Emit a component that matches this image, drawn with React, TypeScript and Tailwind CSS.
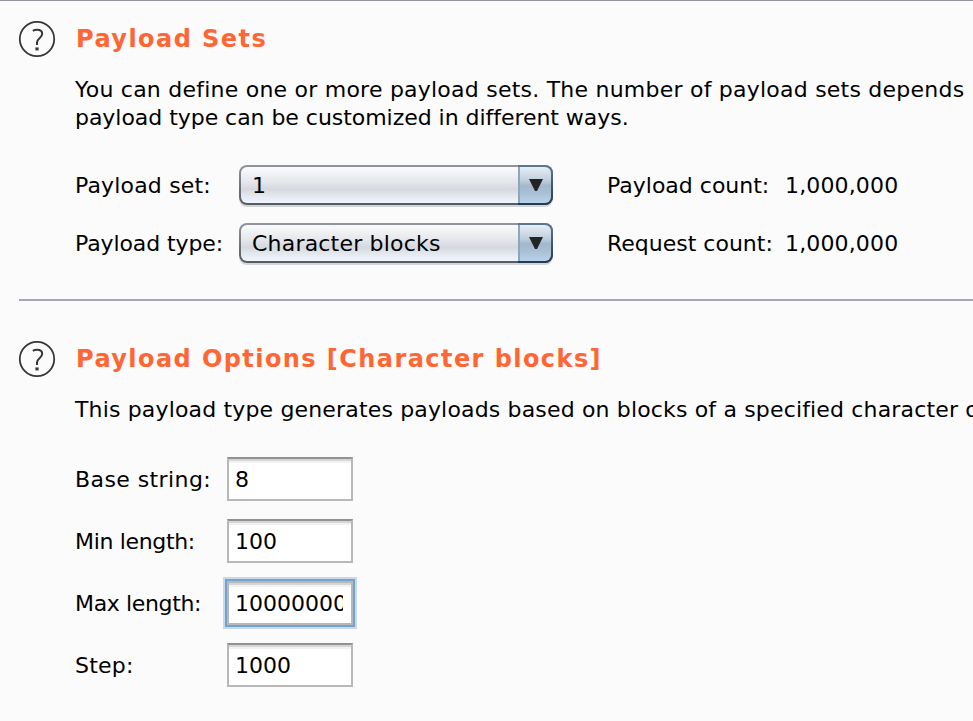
import type { ReactNode } from 'react';

function Help() {
  return (
    <svg className="h-[38px] w-[38px] shrink-0" viewBox="0 0 38 38" fill="none" stroke="#383838">
      <circle cx="19" cy="19" r="17.2" strokeWidth="1.8" />
      <path d="M14.8 10.8Q16.6 9.8 19 9.8C22.4 9.8 24.2 11.4 24.2 13.8C24.2 18 19 18.4 19 22.4V25" strokeWidth="2" />
      <path d="M19 27.4V30.4" strokeWidth="3.2" />
    </svg>
  );
}

function Title({ children, className }: { children: ReactNode; className: string }) {
  return <h2 className={`pl-[1px] text-[24px] leading-[28px] font-bold whitespace-nowrap text-[#ff6633] ${className}`}>{children}</h2>;
}

function Select({ value }: { value: string }) {
  return (
    <button className="flex h-[40px] w-[314px] shrink-0 overflow-hidden rounded-[8px] bg-linear-to-b from-[#92959d] to-[#555b62] p-[2px] text-left shadow-[0_2px_0_#d4d5d6]">
      <span className="flex h-[36px] flex-1 items-center rounded-l-[6px] bg-[linear-gradient(#fbfbfc_0%,#e4e6eb_42%,#d5d8df_62%,#e5e9f0_82%,#f1f5fd_100%)] pt-[2px] pl-[11px]">
        <span className="leading-[28px] tracking-[0.2px] whitespace-nowrap">{value}</span>
      </span>
      <span className="-my-[2px] -mr-[2px] flex h-[40px] w-[35px] bg-linear-to-b from-[#5f7891] to-[#203b53] py-[2px] pr-[2px]">
        <span className="flex h-[36px] w-[33px] justify-center rounded-r-[6px] border-l-2 border-[#8fa5ba] bg-[linear-gradient(#e7eef5_0%,#c0cedc_38%,#a3b8cd_52%,#a9bfd4_72%,#bad2e9_100%)] pt-[12px]">
          <svg className="h-[13px] w-[14px]" viewBox="0 0 14 13"><path d="M0 0H14L8 12H6Z" fill="#242424" /></svg>
        </span>
      </span>
    </button>
  );
}

function SelectRow({ label, value, stat, labelClass }: { label: string; value: string; stat: string; labelClass: string }) {
  return (
    <div className="flex h-[40px] items-center">
      <span className={`w-[164px] shrink-0 pt-[2px] whitespace-nowrap ${labelClass}`}>{label}</span>
      <Select value={value} />
      <span className="ml-[54px] w-[178px] shrink-0 pt-[2px] whitespace-nowrap">{stat}</span>
      <span className="pt-[2px] tracking-[0.15px]">1,000,000</span>
    </div>
  );
}

function Field({ label, value, focused, className }: { label: string; value: string; focused?: boolean; className: string }) {
  return (
    <label className="flex h-[44px] items-center">
      <span className={`w-[152px] shrink-0 pt-[2px] whitespace-nowrap ${className}`}>{label}</span>
      <input
        defaultValue={value}
        className={`h-[44px] w-[126px] border-2 border-[#b8b8b8] bg-white pt-[1px] pr-[8px] pl-[6px] leading-[28px] outline-none ${focused ? 'shadow-[inset_0_2px_0_#d6d6d6,inset_0_4px_0_#f2f2f2,0_0_0_2px_#73a4d1,0_0_0_4px_#c9d9ea]' : 'border-t-[#919191] shadow-[inset_0_2px_0_#d6d6d6,inset_0_4px_0_#f2f2f2]'}`}
      />
    </label>
  );
}

export default function App() {
  return (
    <div className="h-[721px] w-[973px] overflow-hidden border-t border-[#9293a1] bg-[#fbfbfb] font-['DejaVu_Sans',sans-serif] text-[22px] leading-[28px] text-black [font-variant-ligatures:none]">
      <section className="flex h-[298px] pt-[19px] pl-[18px]">
        <Help />
        <div className="ml-[19px] shrink-0 pt-[5px]">
          <Title className="tracking-[1.45px]">Payload Sets</Title>
          <p className="mt-[23px] whitespace-nowrap"><span className="tracking-[0.23px]">You can define one or more payload sets. The number of payload sets depends</span><br /><span className="tracking-[-0.04px]">payload type can be customized in different ways.</span></p>
          <div className="mt-[33px] flex flex-col gap-[18px]">
            <SelectRow label="Payload set:" value="1" stat="Payload count:" labelClass="tracking-[0.17px]" />
            <SelectRow label="Payload type:" value="Character blocks" stat="Request count:" labelClass="tracking-[-0.1px]" />
          </div>
        </div>
      </section>
      <div className="ml-[19px] h-[2px] bg-[#a5a8b3]" />
      <section className="flex pt-[39px] pl-[18px]">
        <Help />
        <div className="ml-[19px] shrink-0 pt-[5px]">
          <Title className="tracking-[1.43px]">Payload Options [Character blocks]</Title>
          <p className="mt-[23px] tracking-[0.16px] whitespace-nowrap">This payload type generates payloads based on blocks of a specified character o</p>
          <div className="mt-[33px] flex flex-col gap-[18px]">
            <Field label="Base string:" value="8" className="tracking-[0.42px]" />
            <Field label="Min length:" value="100" className="tracking-[-0.33px]" />
            <Field label="Max length:" value="100000000" focused className="tracking-[-0.35px]" />
            <Field label="Step:" value="1000" className="tracking-[0.2px]" />
          </div>
        </div>
      </section>
    </div>
  );
}
